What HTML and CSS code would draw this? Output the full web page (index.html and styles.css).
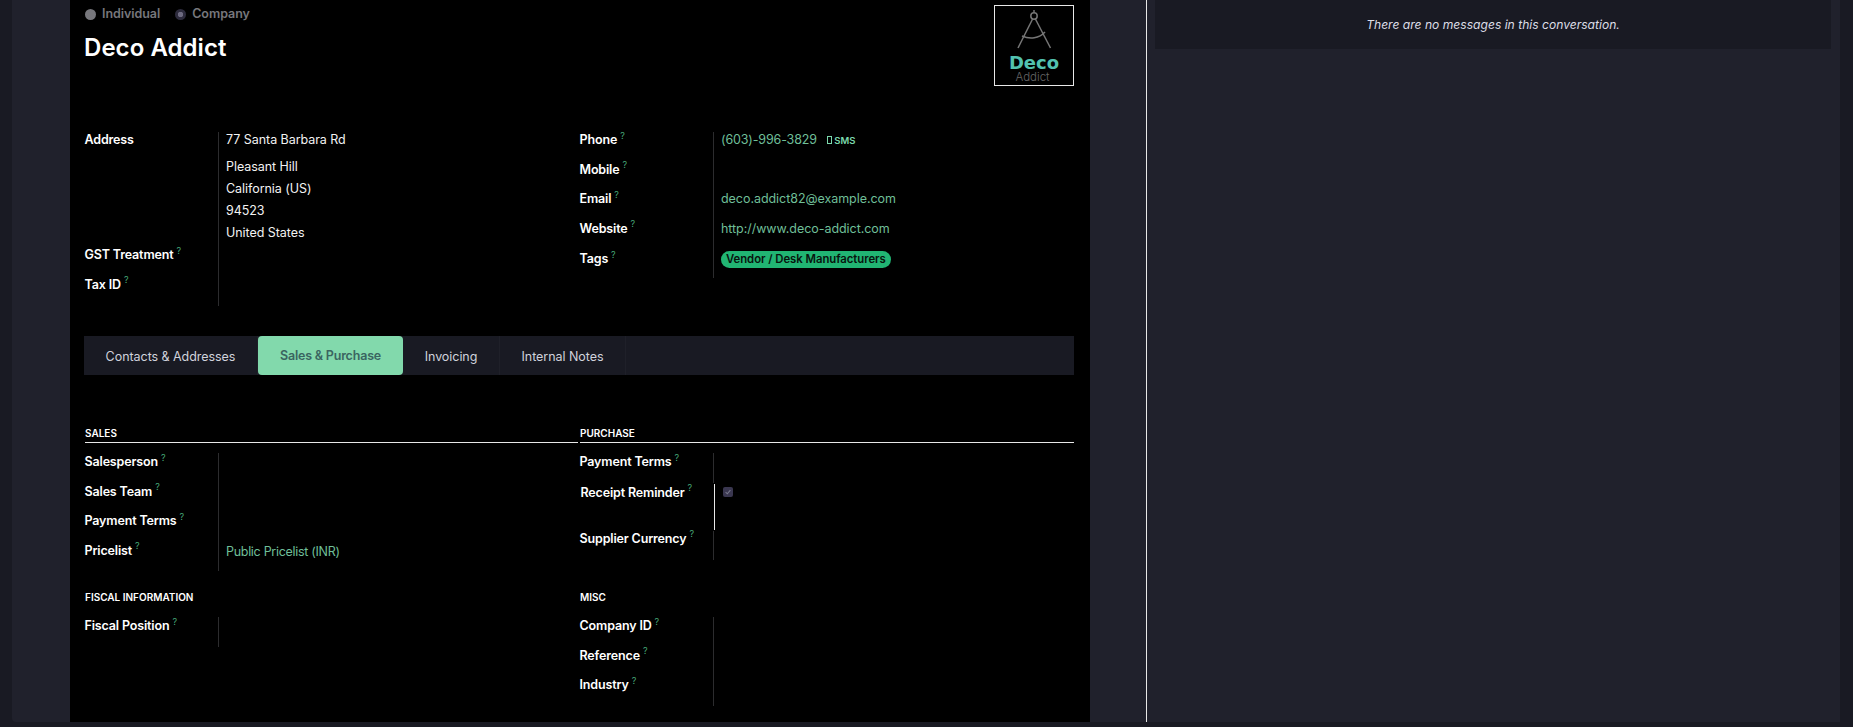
FILE: index.html
```html
<!DOCTYPE html>
<html lang="en">
<head>
    <meta charset="UTF-8">
    <meta name="viewport" content="width=device-width, initial-scale=1.0">
    <title>Deco Addict</title>
    <link rel="stylesheet" href="styles.css">
</head>
<body>

<div class="app">
    <main class="form-view">
        <div class="sheet">

            <div class="head">
                <div>
                    <div class="radios">
                        <span class="radio"><i class="dot"></i>Individual</span>
                        <span class="radio"><i class="dot dot-on"></i>Company</span>
                    </div>
                    <h1 class="title">Deco Addict</h1>
                </div>
                <div class="logo">
                    <svg class="logo-mark" width="36" height="40" viewBox="0 0 36 40" fill="none" stroke="#767676" stroke-width="1.500">
                        <circle cx="18" cy="6" r="3.200"/>
                        <path d="M18 0v2.800"/>
                        <path d="M16.600 9 2 38"/>
                        <path d="M19.400 9 34.500 38"/>
                        <path d="M6 26c8 3.500 17 2.500 23-4"/>
                    </svg>
                    <span class="logo-name">Deco</span>
                    <span class="logo-sub">Addict</span>
                </div>
            </div>

            <div class="groups">
                <div>
                    <div class="row row-address">
                        <label class="lbl">Address</label>
                        <div class="val">
                            <div class="addr-first">77 Santa Barbara Rd</div>
                            <div class="addr-line">Pleasant Hill</div>
                            <div class="addr-line">California (US)</div>
                            <div class="addr-line">94523</div>
                            <div class="addr-line">United States</div>
                        </div>
                    </div>
                    <div class="row">
                        <label class="lbl">GST Treatment<sup>?</sup></label>
                        <div class="val"></div>
                    </div>
                    <div class="row">
                        <label class="lbl">Tax ID<sup>?</sup></label>
                        <div class="val"></div>
                    </div>
                </div>
                <div>
                    <div class="row">
                        <label class="lbl">Phone<sup>?</sup></label>
                        <div class="val">
                            <a class="link phone" href="#">(603)-996-3829</a>
                            <a class="sms" href="#"><i class="sms-icon"></i>SMS</a>
                        </div>
                    </div>
                    <div class="row">
                        <label class="lbl">Mobile<sup>?</sup></label>
                        <div class="val"></div>
                    </div>
                    <div class="row">
                        <label class="lbl">Email<sup>?</sup></label>
                        <div class="val"><a class="link" href="#">deco.addict82@example.com</a></div>
                    </div>
                    <div class="row">
                        <label class="lbl">Website<sup>?</sup></label>
                        <div class="val"><a class="link" href="#">http://www.deco-addict.com</a></div>
                    </div>
                    <div class="row row-last">
                        <label class="lbl">Tags<sup>?</sup></label>
                        <div class="val"><span class="tag">Vendor / Desk Manufacturers</span></div>
                    </div>
                </div>
            </div>

            <nav class="tabs">
                <a class="tab tab-contacts" href="#">Contacts &amp; Addresses</a>
                <a class="tab tab-sales active" href="#">Sales &amp; Purchase</a>
                <a class="tab tab-invoicing" href="#">Invoicing</a>
                <a class="tab tab-notes" href="#">Internal Notes</a>
            </nav>

            <div class="tab-content">
                <section>
                    <h2 class="sep sep-left">Sales</h2>
                    <div class="row">
                        <label class="lbl">Salesperson<sup>?</sup></label>
                        <div class="val"></div>
                    </div>
                    <div class="row">
                        <label class="lbl">Sales Team<sup>?</sup></label>
                        <div class="val"></div>
                    </div>
                    <div class="row">
                        <label class="lbl">Payment Terms<sup>?</sup></label>
                        <div class="val"></div>
                    </div>
                    <div class="row">
                        <label class="lbl">Pricelist<sup>?</sup></label>
                        <div class="val val-low"><a class="link" href="#">Public Pricelist (INR)</a></div>
                    </div>
                </section>

                <section>
                    <h2 class="sep">Purchase</h2>
                    <div class="row">
                        <label class="lbl">Payment Terms<sup>?</sup></label>
                        <div class="val"></div>
                    </div>
                    <div class="row row-tall">
                        <label class="lbl">Receipt Reminder<sup>?</sup></label>
                        <div class="val val-focus">
                            <span class="check">
                                <svg width="6" height="6" viewBox="0 0 6 6" fill="none" stroke="#77778a" stroke-width="1.100"><path d="M.6 3.200 2.300 4.800 5.400 1.200"/></svg>
                            </span>
                        </div>
                    </div>
                    <div class="row">
                        <label class="lbl">Supplier Currency<sup>?</sup></label>
                        <div class="val"></div>
                    </div>
                </section>

                <section>
                    <h2 class="sub">Fiscal Information</h2>
                    <div class="row">
                        <label class="lbl">Fiscal Position<sup>?</sup></label>
                        <div class="val"></div>
                    </div>
                </section>

                <section>
                    <h2 class="sub">Misc</h2>
                    <div class="row">
                        <label class="lbl">Company ID<sup>?</sup></label>
                        <div class="val"></div>
                    </div>
                    <div class="row">
                        <label class="lbl">Reference<sup>?</sup></label>
                        <div class="val"></div>
                    </div>
                    <div class="row">
                        <label class="lbl">Industry<sup>?</sup></label>
                        <div class="val"></div>
                    </div>
                </section>
            </div>

        </div>
    </main>

    <aside class="chatter">
        <div class="no-messages">There are no messages in this conversation.</div>
    </aside>
</div>

</body>
</html>
```

FILE: styles.css
```css
/* base */
html, body {
    height: 100%;
}
body {
    margin: 0;
    overflow: hidden;
    background-color: #191a23;
    color: #fff;
    font-family: Inter, "Noto Sans", sans-serif;
    font-size: 12.500px;
    line-height: 15px;
}
a {
    text-decoration: none;
}

.app {
    display: flex;
    height: 722px;
    padding: 0 13px 0 12px;
}

/* left side, the form */
.form-view {
    width: 1020px;
    padding: 0 56px 0 58px;
    background-color: #20212c;
    border-right: 1px solid #e8e8e8;
    border-bottom-left-radius: 4px;
}
.sheet {
    height: 100%;
    padding: 5px 16px 0 14px;
    box-sizing: border-box;
    background-color: #000;
}

.head {
    display: flex;
    justify-content: space-between;
    height: 81px;
    margin-bottom: 46px;
}
.radios {
    display: flex;
    gap: 14px;
    line-height: 18px;
}
.radio {
    display: flex;
    align-items: center;
    gap: 6px;
    margin-left: 1px;
    color: #77777c;
    font-weight: 600;
    letter-spacing: -0.05px;
}
.dot {
    width: 11px;
    height: 11px;
    border-radius: 50%;
    background-color: #77777c;
}
.dot-on {
    background: radial-gradient(circle, #6d6a80 0 2.500px, #2d2b3d 3px);
}
.title {
    margin: 7px 0 0 0;
    font-size: 24px;
    line-height: 36px;
    font-weight: 600;
    letter-spacing: 0.05px;
}

.logo {
    width: 78px;
    height: 79px;
    border: 1px solid #e8e8e8;
    display: flex;
    flex-direction: column;
    align-items: center;
}
.logo-mark {
    margin-top: 4px;
}
.logo-name {
    margin-top: 6px;
    color: #52c2b0;
    font-family: "DejaVu Sans", sans-serif;
    font-size: 18px;
    line-height: 14px;
    font-weight: 700;
}
.logo-sub {
    margin: 2px 3px 0 0;
    color: #666;
    font-size: 11.500px;
    line-height: 10px;
    font-weight: 300;
}

/* fields */
.groups, .tab-content {
    display: grid;
    grid-template-columns: 495px 495px;
}
.row {
    display: flex;
    height: 29.500px;
}
.row-address {
    height: 115px;
}
.row-last {
    height: 28px;
}
.row-tall {
    height: 46px;
    margin: 1px 0 1px 1px;
}
.lbl {
    width: 134px;
    padding-left: 0.500px;
    box-sizing: border-box;
    font-weight: 600;
    letter-spacing: -0.150px;
}
.row-last .lbl, .tab-content .lbl {
    padding-top: 1px;
}
.tab-content .row-tall + .row .lbl {
    padding-top: 0;
}
.lbl sup {
    margin-left: 3px;
    font-size: 9px;
    line-height: 0;
    font-weight: 400;
    color: #46a878;
}
.val {
    flex: 1;
    border-left: 1px solid #2c2c2e;
    padding-left: 7px;
    color: #f2f2f2;
    letter-spacing: -0.050px;
}
.val-focus {
    border-left-color: #e8e8e8;
    padding-left: 8px;
}
.val-low {
    padding-top: 2px;
    letter-spacing: -0.300px;
}
.addr-line {
    margin-top: 7px;
}
.addr-first {
    margin-bottom: 12px;
}
.link {
    color: #6fbf98;
}
.phone {
    margin-right: 7px;
    letter-spacing: -0.150px;
}
.sms {
    display: inline-flex;
    align-items: center;
    gap: 2px;
    color: #7bd8ac;
    font-size: 9.500px;
    font-weight: 600;
}
.sms-icon {
    width: 3px;
    height: 6px;
    border: 1px solid #7bd8ac;
}
.tag {
    display: inline-block;
    padding: 0 5px;
    margin-top: 1px;
    border-radius: 9px;
    background-color: #21b573;
    color: #08140e;
    font-size: 11.350px;
    line-height: 17px;
    font-weight: 600;
}
.check {
    display: flex;
    align-items: center;
    justify-content: center;
    width: 10px;
    height: 10px;
    margin-top: 3px;
    border-radius: 2px;
    background-color: #3a3750;
}

/* tabs */
.tabs {
    display: flex;
    height: 39px;
    margin-top: 30px;
    background-color: #191a23;
}
.tab {
    display: flex;
    align-items: center;
    justify-content: center;
    box-sizing: border-box;
    padding-top: 1px;
    color: #d0d2dc;
    border-right: 1px solid #1f2029;
    letter-spacing: -0.050px;
}
.tab-contacts { width: 174px; }
.tab-sales { width: 145px; }
.tab-invoicing { width: 97px; }
.tab-notes { width: 126px; }
.tab.active {
    padding-top: 0;
    background-color: #82d9ac;
    color: #3a6561;
    border-radius: 4px;
    border-right: 0;
    font-weight: 600;
    letter-spacing: -0.200px;
}

.tab-content {
    padding-top: 51px;
    row-gap: 19px;
}
.sep, .sub {
    margin: 0 0 0 1px;
    font-size: 10px;
    line-height: 15px;
    font-weight: 600;
    text-transform: uppercase;
}
.sep {
    padding-bottom: 1px;
    border-bottom: 1px solid #e8e8e8;
    margin-bottom: 10px;
}
.sep-left {
    margin-right: 1px;
}
.sub {
    margin-bottom: 12px;
}

/* right side, the messages */
.chatter {
    flex: 1;
    padding: 0 9px 0 8px;
    background-color: #20212c;
}
.no-messages {
    display: flex;
    align-items: center;
    justify-content: center;
    height: 49px;
    background-color: #191a23;
    color: #dcdde6;
    font-size: 12.100px;
    font-style: italic;
}
```
